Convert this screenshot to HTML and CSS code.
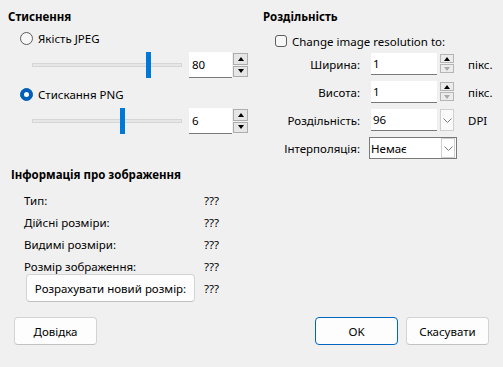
FILE: index.html
```html
<!DOCTYPE html>
<html>
<head>
    <title>Параметри зображення</title>
    <link rel="stylesheet" href="styles.css">
</head>
<body>
    <div class="dialog">
        <div class="top">
            <section class="compress">
                <h3 class="group-title">Стиснення</h3>
                <label class="radio"><span class="radio-mark"></span>Якість JPEG</label>
                <div class="slider-row">
                    <div class="slider">
                        <div class="track"></div>
                        <div class="thumb" style="left: 114px"></div>
                    </div>
                    <div class="spin big">
                        <div class="field">80</div>
                        <div class="spin-btns">
                            <div class="spin-btn"><span class="arrow up"></span></div>
                            <div class="spin-btn"><span class="arrow down"></span></div>
                        </div>
                    </div>
                </div>
                <label class="radio"><span class="radio-mark checked"></span>Стискання PNG</label>
                <div class="slider-row">
                    <div class="slider">
                        <div class="track"></div>
                        <div class="thumb" style="left: 88px"></div>
                    </div>
                    <div class="spin big">
                        <div class="field">6</div>
                        <div class="spin-btns">
                            <div class="spin-btn"><span class="arrow up"></span></div>
                            <div class="spin-btn"><span class="arrow down"></span></div>
                        </div>
                    </div>
                </div>
            </section>

            <section class="resolution">
                <h3 class="group-title">Роздільність</h3>
                <label class="check"><span class="check-mark"></span>Change image resolution to:</label>
                <div class="res-form">
                    <span class="res-label">Ширина:</span>
                    <div class="spin small">
                        <div class="field">1</div>
                        <div class="spin-btns">
                            <div class="spin-btn"><span class="arrow up"></span></div>
                            <div class="spin-btn"><span class="arrow down off"></span></div>
                        </div>
                    </div>
                    <span class="unit">пікс.</span>

                    <span class="res-label">Висота:</span>
                    <div class="spin small">
                        <div class="field">1</div>
                        <div class="spin-btns">
                            <div class="spin-btn"><span class="arrow up"></span></div>
                            <div class="spin-btn"><span class="arrow down off"></span></div>
                        </div>
                    </div>
                    <span class="unit">пікс.</span>

                    <span class="res-label">Роздільність:</span>
                    <div class="combo">
                        <div class="field">96</div>
                        <div class="drop-btn">
                            <svg width="9" height="5" viewBox="0 0 9 5"><polyline points="0.5,0.5 4.5,4.5 8.5,0.5" fill="none" stroke="#7a7a7a" stroke-width="1"/></svg>
                        </div>
                    </div>
                    <span class="unit">DPI</span>

                    <span class="res-label">Інтерполяція:</span>
                    <div class="combo boxed">
                        <div class="field">Немає</div>
                        <div class="drop-btn">
                            <svg width="9" height="5" viewBox="0 0 9 5"><polyline points="0.5,0.5 4.5,4.5 8.5,0.5" fill="none" stroke="#7a7a7a" stroke-width="1"/></svg>
                        </div>
                    </div>
                    <span class="unit"></span>
                </div>
            </section>
        </div>

        <section class="info">
            <h3 class="group-title">Інформація про зображення</h3>
            <div class="info-grid">
                <span>Тип:</span><span>???</span>
                <span>Дійсні розміри:</span><span>???</span>
                <span>Видимі розміри:</span><span>???</span>
                <span>Розмір зображення:</span><span>???</span>
                <span><button class="btn calc">Розрахувати новий розмір:</button></span><span>???</span>
            </div>
        </section>

        <div class="buttons">
            <button class="btn">Довідка</button>
            <div class="spacer"></div>
            <button class="btn default">OK</button>
            <button class="btn">Скасувати</button>
        </div>
    </div>
</body>
</html>
```

FILE: styles.css
```css
* {
    box-sizing: border-box;
}

body {
    margin: 0;
    background: #f0f0f0;
    font-family: "Noto Sans", "Open Sans", sans-serif;
    font-size: 11.5px;
    color: #000;
}

.dialog {
    width: 503px;
    height: 367px;
}

.top {
    display: flex;
}

.compress {
    width: 255px;
    padding-left: 8px;
}

.resolution {
    flex: 1;
    padding-left: 8px;
}

.group-title {
    margin: 9px 0 0;
    font-size: 11.5px;
    font-weight: bold;
    line-height: 16px;
}

/* radio + checkbox */
.radio, .check {
    display: flex;
    align-items: center;
    gap: 5px;
    height: 16px;
    padding-left: 12px;
}

.radio {
    margin-top: 5px;
}

.radio + .radio, .slider-row + .radio {
    margin-top: 8px;
}

.radio-mark {
    width: 13px;
    height: 13px;
    border: 1px solid #5d5d5d;
    border-radius: 50%;
    background: #f7f7f7;
}

.radio-mark.checked {
    display: flex;
    align-items: center;
    justify-content: center;
    background: #005fb8;
    border-color: #005fb8;
}

.radio-mark.checked::after {
    content: "";
    width: 5px;
    height: 5px;
    border-radius: 50%;
    background: #fff;
}

.check {
    margin-top: 8px;
}

.check-mark {
    width: 12px;
    height: 12px;
    border: 1px solid #5d5d5d;
    border-radius: 3px;
    background: #f7f7f7;
}

/* slider */
.slider-row {
    display: flex;
    height: 26px;
    margin-top: 6px;
    padding-left: 24px;
}

.slider {
    position: relative;
    width: 150px;
}

.track {
    position: absolute;
    left: 0;
    right: 0;
    top: 11px;
    height: 4px;
    background: #e7e7e7;
    border: 1px solid #d6d6d6;
}

.thumb {
    position: absolute;
    top: 0;
    width: 5px;
    height: 26px;
    background: #0078d7;
}

/* spin boxes */
.spin {
    display: flex;
}

.spin.big {
    margin-left: 7px;
    height: 26px;
}

.field {
    background: #fff;
    border-bottom: 1px solid #7a7a7a;
    padding-left: 3px;
    display: flex;
    align-items: center;
}

.spin.big .field {
    width: 43px;
}

.spin-btns {
    display: flex;
    flex-direction: column;
    gap: 1px;
}

.spin.big .spin-btns {
    width: 15px;
    margin-left: 1px;
    padding: 1px 0;
}

.spin-btn {
    flex: 1;
    display: flex;
    align-items: center;
    justify-content: center;
    background: #e6e6e6;
    border: 1px solid #adadad;
}

.arrow {
    width: 0;
    height: 0;
    border-left: 3.5px solid transparent;
    border-right: 3.5px solid transparent;
}

.arrow.up {
    border-bottom: 4px solid #000;
}

.arrow.down {
    border-top: 4px solid #000;
}

.arrow.down.off {
    border-top-color: #a8a8a8;
}

/* resolution form */
.res-form {
    display: grid;
    grid-template-columns: 97px 83px auto;
    column-gap: 11px;
    row-gap: 6px;
    margin-top: 4px;
    align-items: center;
}

.res-form .unit {
    padding-left: 3px;
}

.res-label {
    text-align: right;
}

.spin.small {
    height: 22px;
}

.spin.small .field, .combo .field {
    width: 66px;
    padding-left: 2px;
}

.spin.small .spin-btns {
    width: 14px;
    margin-left: 3px;
    padding: 1px 0 2px;
}

.spin.small .spin-btn {
    background: #ececec;
    border-color: #b5b5b5;
}

.combo {
    display: flex;
    height: 22px;
}

.drop-btn {
    width: 14px;
    margin-left: 3px;
    display: flex;
    align-items: center;
    justify-content: center;
    background: #fafafa;
    border: 1px solid #cfcfcf;
}

.combo.boxed {
    width: 88px;
    margin-left: -2px;
    border: 1px solid #7a7a7a;
    background: #fff;
}

.combo.boxed .field {
    border: none;
    width: 69px;
    padding-left: 1px;
}

.combo.boxed .drop-btn {
    margin: 0 0 0 2px;
    background: #fff;
}

/* image info */
.info {
    padding-left: 11px;
}

.info .group-title {
    margin-top: 8px;
}

.info-grid {
    display: grid;
    grid-template-columns: 180px auto;
    grid-auto-rows: 22px;
    align-items: center;
    margin-top: 6px;
    margin-left: 13px;
}

.info-grid > span:nth-last-child(-n+2) {
    height: 28px;
    display: flex;
    align-items: center;
}

.btn {
    font-family: inherit;
    font-size: 11.5px;
    color: #000;
    height: 28px;
    width: 83px;
    background: #fdfdfd;
    border: 1px solid #d3d3d3;
    border-bottom-color: #c2c2c2;
    border-radius: 4px;
    padding: 0;
}

.btn.calc {
    width: 169px;
    margin-left: 2px;
}

.btn.default {
    border: 1px solid #0067c0;
}

.buttons {
    display: flex;
    gap: 8px;
    margin-top: 18px;
    padding: 0 14px;
}

.spacer {
    flex: 1;
}
```
